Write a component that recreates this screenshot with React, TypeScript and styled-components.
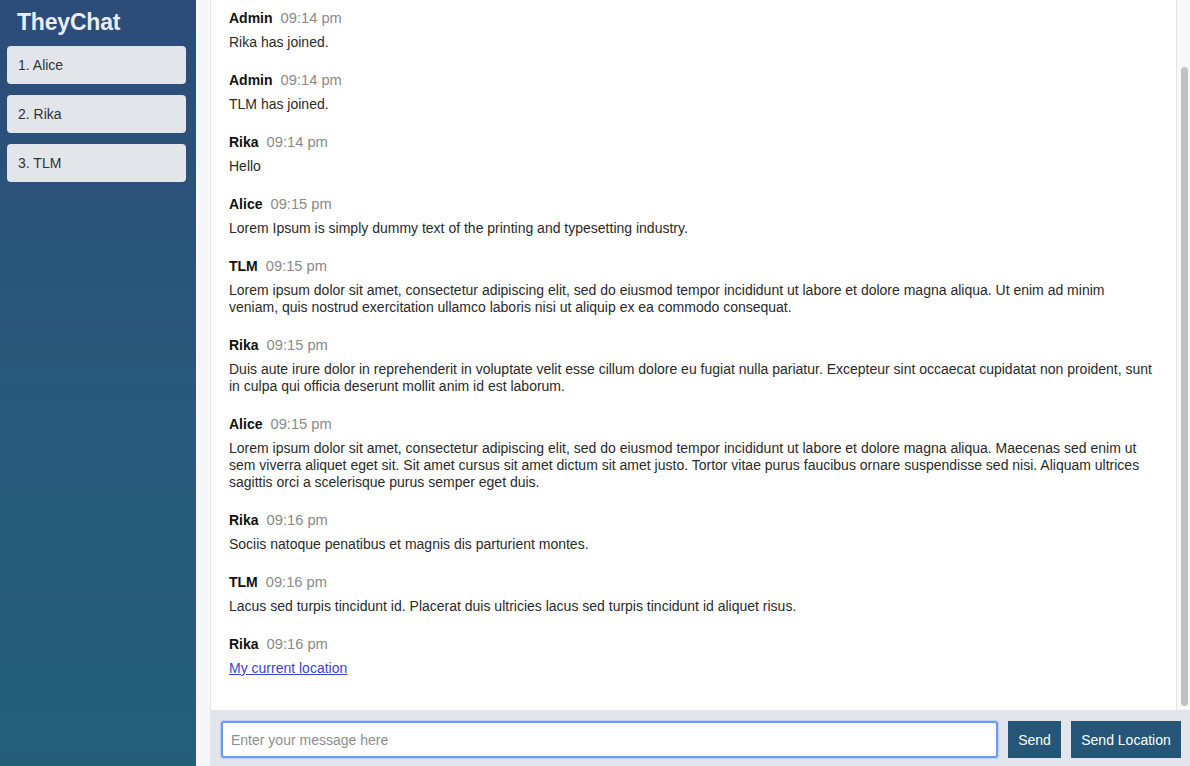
import React, { useLayoutEffect, useRef, useState } from "react";
import styled, { createGlobalStyle } from "styled-components";

const GlobalStyle = createGlobalStyle`
  html, body { margin: 0; padding: 0; height: 100%; }
  body { font-family: "Liberation Sans", Arial, sans-serif; background: #f7f7f9; }
  #root { height: 100%; }
  * { box-sizing: border-box; }
`;

const Layout = styled.div`
  display: grid;
  grid-template-columns: 196px 1fr;
  height: 766px;
  overflow: hidden;
`;

const Sidebar = styled.aside`
  background: linear-gradient(180deg, #2c4c79 0%, #285a7b 55%, #245f78 100%);
  padding: 8px 10px 0 7px;
  display: flex;
  flex-direction: column;
  gap: 11px;
`;

const Brand = styled.h1`
  margin: 0 0 -1px 10px;
  font-size: 23px;
  line-height: 28px;
  font-weight: 700;
  color: #e9edf3;
  letter-spacing: -0.2px;
`;

const UserCard = styled.div`
  height: 38px;
  display: flex;
  align-items: center;
  padding-left: 11px;
  background: #e2e6eb;
  border-radius: 4px;
  color: #333;
  font-size: 14px;
`;

const Main = styled.main`
  padding-left: 14px;
  background: #f7f7f9;
  display: flex;
  flex-direction: column;
  min-height: 0;
`;

const MessagesPane = styled.div`
  flex: 1;
  min-height: 0;
  display: flex;
  background: #fff;
  border-left: 1px solid #e6e6e8;
`;

const Messages = styled.section`
  flex: 1;
  min-width: 0;
  overflow-y: scroll;
  scrollbar-width: none;
  padding: 82px 21px 12px 18px;
  &::-webkit-scrollbar { display: none; }
`;

const ScrollTrack = styled.div`
  flex: 0 0 14px;
  position: relative;
  background: #f8f8f8;
  border-left: 1px solid #e4e4e4;
`;

const ScrollThumb = styled.div`
  position: absolute;
  left: 4px;
  width: 7px;
  border-radius: 4px;
  background: #c1c1c1;
`;

const Message = styled.article`
  margin-bottom: 21px;
`;

const Meta = styled.div`
  display: flex;
  align-items: baseline;
  height: 20px;
  margin-bottom: 4px;
`;

const Name = styled.span`
  font-weight: 700;
  font-size: 14px;
  color: #111;
  margin-right: 8px;
`;

const Time = styled.span`
  font-size: 14.7px;
  color: #8a8a8a;
`;

const Body = styled.p`
  margin: 0;
  font-size: 14px;
  line-height: 17px;
  color: #2a2a2a;
`;

const LocationLink = styled.a`
  color: #3b3fd8;
  text-decoration: underline;
`;

const Compose = styled.form`
  flex-shrink: 0;
  height: 56px;
  background: #e2e6ec;
  display: flex;
  align-items: flex-start;
  gap: 10px;
  padding: 11px 9px 0 11px;
`;

const Input = styled.input`
  flex: 1;
  height: 37px;
  border: 2px solid #6b9cf0;
  border-radius: 3px;
  box-shadow: 0 0 0 1px #b9cff6;
  padding: 0 8px;
  font-family: inherit;
  font-size: 14px;
  color: #222;
  outline: none;
  &::placeholder { color: #8d8d8d; }
`;

const Button = styled.button<{ $w: number }>`
  width: ${(p) => p.$w}px;
  height: 37px;
  border: none;
  background: #265677;
  color: #fff;
  font-family: inherit;
  font-size: 14px;
  padding: 0;
  cursor: pointer;
`;

type Msg = { name: string; time: string; text?: string; link?: string };

const msgs: Msg[] = [
  { name: "Admin", time: "09:14 pm", text: "Rika has joined." },
  { name: "Admin", time: "09:14 pm", text: "TLM has joined." },
  { name: "Rika", time: "09:14 pm", text: "Hello" },
  { name: "Alice", time: "09:15 pm", text: "Lorem Ipsum is simply dummy text of the printing and typesetting industry." },
  {
    name: "TLM",
    time: "09:15 pm",
    text: "Lorem ipsum dolor sit amet, consectetur adipiscing elit, sed do eiusmod tempor incididunt ut labore et dolore magna aliqua. Ut enim ad minim veniam, quis nostrud exercitation ullamco laboris nisi ut aliquip ex ea commodo consequat.",
  },
  {
    name: "Rika",
    time: "09:15 pm",
    text: "Duis aute irure dolor in reprehenderit in voluptate velit esse cillum dolore eu fugiat nulla pariatur. Excepteur sint occaecat cupidatat non proident, sunt in culpa qui officia deserunt mollit anim id est laborum.",
  },
  {
    name: "Alice",
    time: "09:15 pm",
    text: "Lorem ipsum dolor sit amet, consectetur adipiscing elit, sed do eiusmod tempor incididunt ut labore et dolore magna aliqua. Maecenas sed enim ut sem viverra aliquet eget sit. Sit amet cursus sit amet dictum sit amet justo. Tortor vitae purus faucibus ornare suspendisse sed nisi. Aliquam ultrices sagittis orci a scelerisque purus semper eget duis.",
  },
  { name: "Rika", time: "09:16 pm", text: "Sociis natoque penatibus et magnis dis parturient montes." },
  { name: "TLM", time: "09:16 pm", text: "Lacus sed turpis tincidunt id. Placerat duis ultricies lacus sed turpis tincidunt id aliquet risus." },
  { name: "Rika", time: "09:16 pm", link: "My current location" },
];

const users = ["Alice", "Rika", "TLM"];

export default function App() {
  const ref = useRef<HTMLElement>(null);
  const [thumb, setThumb] = useState({ top: 0, height: 0 });

  const update = () => {
    const el = ref.current;
    if (!el) return;
    const track = el.clientHeight;
    const ratio = track / el.scrollHeight;
    setThumb({ top: el.scrollTop * ratio + 2, height: Math.max(20, track * ratio - 6) });
  };

  useLayoutEffect(() => {
    if (ref.current) ref.current.scrollTop = ref.current.scrollHeight;
    update();
  }, []);

  return (
    <>
      <GlobalStyle />
      <Layout>
        <Sidebar>
          <Brand>TheyChat</Brand>
          {users.map((u, i) => (
            <UserCard key={u}>
              {i + 1}. {u}
            </UserCard>
          ))}
        </Sidebar>
        <Main>
          <MessagesPane>
            <Messages ref={ref} onScroll={update}>
              {msgs.map((m, i) => (
                <Message key={i}>
                  <Meta>
                    <Name>{m.name}</Name>
                    <Time>{m.time}</Time>
                  </Meta>
                  <Body>
                    {m.link ? <LocationLink href="#">{m.link}</LocationLink> : m.text}
                  </Body>
                </Message>
              ))}
            </Messages>
            <ScrollTrack>
              <ScrollThumb style={{ top: thumb.top, height: thumb.height }} />
            </ScrollTrack>
          </MessagesPane>
          <Compose onSubmit={(e) => e.preventDefault()}>
            <Input placeholder="Enter your message here" />
            <Button $w={53} type="submit">Send</Button>
            <Button $w={110} type="button">Send Location</Button>
          </Compose>
        </Main>
      </Layout>
    </>
  );
}
